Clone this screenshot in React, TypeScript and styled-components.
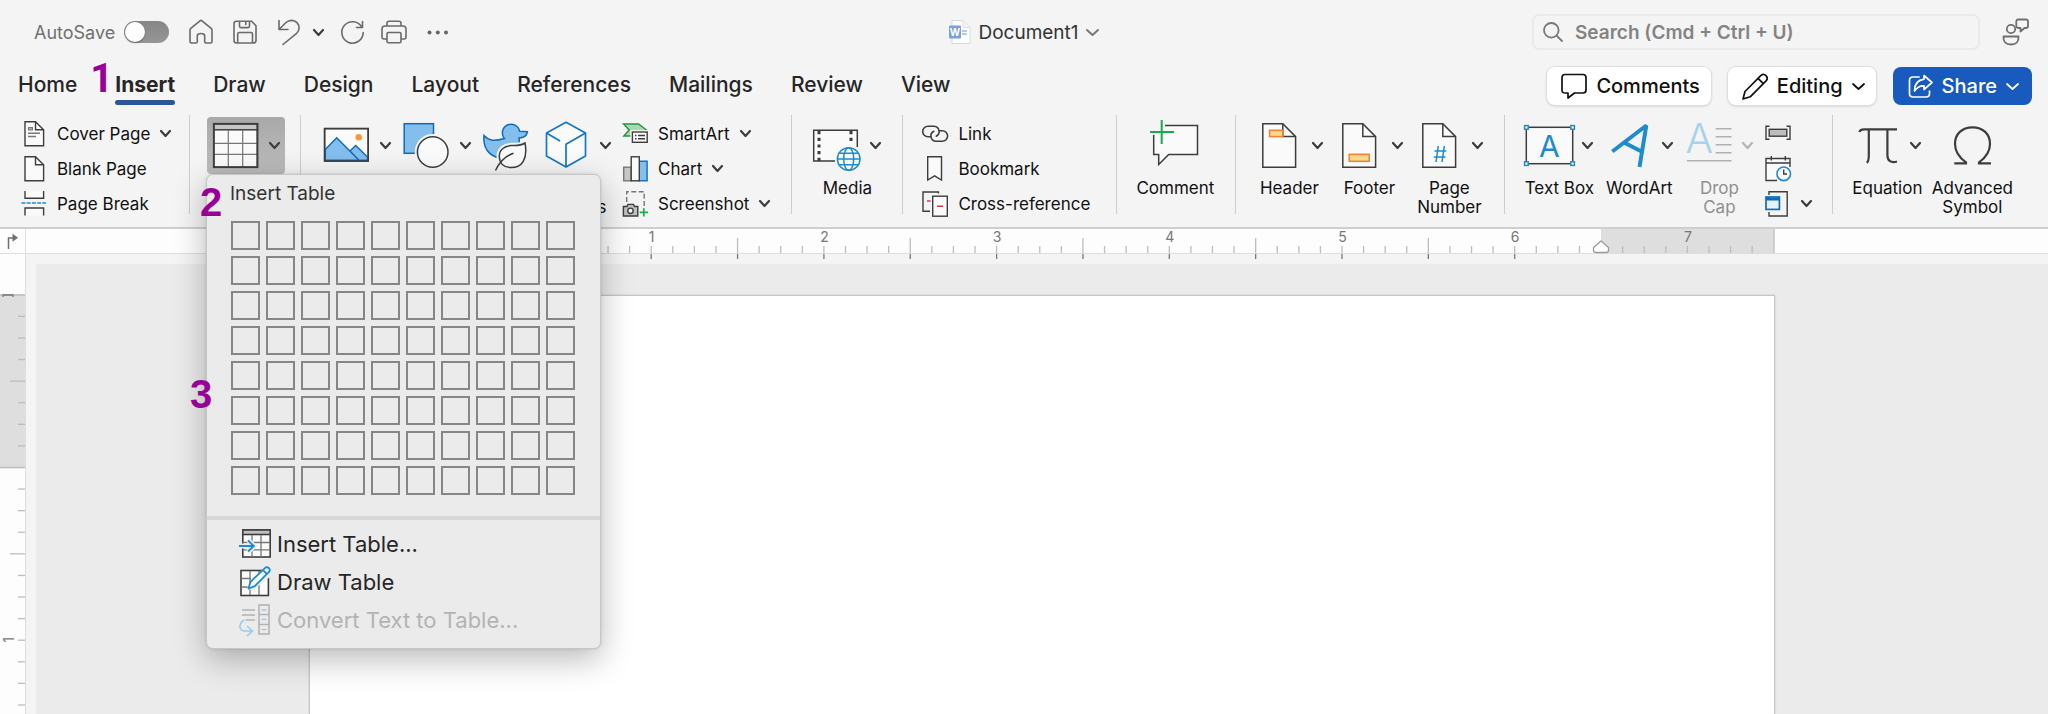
import React from "react";
import styled, { createGlobalStyle, css } from "styled-components";

const GlobalStyle = createGlobalStyle`
  *, *::before, *::after { box-sizing: border-box; }
  body {
    margin: 0;
    background: #f4f4f4;
    color: #1c1c1c;
    font-family: Inter, "Liberation Sans", sans-serif;
    font-size: 17px;
    overflow: hidden;
  }
  button, input { font: inherit; color: inherit; }
  button { background: none; border: 0; padding: 0; margin: 0; cursor: pointer; }
  svg { display: block; flex: none; overflow: visible; }
`;

const INK = "#3d3d3d";
const BLUE = "#1e8bcd";
const PAPER = "#fafafa";

/* ---------- window frame ---------- */

const Window = styled.div`
  display: flex;
  flex-direction: column;
  height: 100vh;
  overflow: hidden;
`;

const TitleBar = styled.header`
  display: grid;
  grid-template-columns: 1fr auto 1fr;
  align-items: center;
  height: 64px;
  padding: 0 18px;
`;

const QuickAccess = styled.div`
  display: flex;
  align-items: center;
  gap: 20px;
  padding-left: 16px;
  color: #666;
`;

const HistoryTools = styled.div`
  display: flex;
  align-items: center;
  gap: 16px;
`;

const AutoSave = styled.label`
  display: flex;
  align-items: center;
  gap: 9px;
  font-size: 18px;
  color: #707070;
`;

const Switch = styled.input`
  appearance: none;
  width: 45px;
  height: 22px;
  margin: 0;
  border-radius: 11px;
  background: linear-gradient(#868686, #969696);
  &::before {
    content: "";
    display: block;
    width: 20px;
    height: 20px;
    margin: 1px;
    border-radius: 50%;
    background: #fff;
    box-shadow: 0 1px 2px rgba(0, 0, 0, 0.35);
  }
`;

const IconButton = styled.button`
  display: flex;
  align-items: center;
  gap: 12px;
  color: inherit;
`;

const DocTitle = styled.button`
  display: flex;
  align-items: center;
  font-size: 19px;
  color: #333;
  gap: 7px;
`;

const TitleEnd = styled.div`
  display: flex;
  align-items: center;
  justify-content: flex-end;
  gap: 22px;
  color: #6f6f6f;
`;

const SearchBox = styled.label`
  display: flex;
  align-items: center;
  gap: 12px;
  width: 448px;
  height: 36px;
  padding: 0 9px;
  border: 2px solid #eaeaea;
  border-radius: 7px;
`;

const SearchInput = styled.input`
  flex: 1;
  min-width: 0;
  border: 0;
  padding: 0;
  outline: 0;
  background: none;
  font-size: 19px;
  font-weight: 600;
  &::placeholder { color: #838383; opacity: 1; }
`;

/* ---------- tabs ---------- */

const TabBar = styled.div`
  display: flex;
  align-items: flex-start;
  justify-content: space-between;
  height: 51px;
  padding: 0 16px 0 18px;
`;

const Tabs = styled.nav`
  display: flex;
  gap: 38px;
  padding-top: 8px;
`;

const Tab = styled.button<{ $active?: boolean }>`
  position: relative;
  height: 33px;
  line-height: 26px;
  padding-bottom: 7px;
  font-size: 21px;
  font-weight: ${(p) => (p.$active ? 700 : 500)};
  color: #262626;
  ${(p) =>
    p.$active &&
    css`
      &::after {
        content: "";
        position: absolute;
        left: 0;
        right: 0;
        bottom: 0;
        height: 5px;
        border-radius: 3px;
        background: #2b579a;
      }
    `}
`;

const Actions = styled.div`
  display: flex;
  gap: 17px;
  padding-top: 3px;
`;

const ActionButton = styled.button<{ $primary?: boolean }>`
  display: flex;
  align-items: center;
  justify-content: center;
  gap: 9px;
  height: 38px;
  padding: ${(p) => (p.$primary ? "0 13px 0 15px" : "0 11px 0 14px")};
  border-radius: 8px;
  font-size: 20px;
  font-weight: 500;
  color: ${(p) => (p.$primary ? "#fff" : "#111")};
  background: ${(p) => (p.$primary ? "#185abd" : "#fff")};
  box-shadow: ${(p) =>
    p.$primary ? "none" : "0 0 0 1px #dedede, 0 1px 3px rgba(0, 0, 0, 0.2)"};
`;

/* ---------- ribbon ---------- */

const Ribbon = styled.section`
  display: flex;
  flex: none;
  height: 114px;
  border-bottom: 2px solid #cfcfcf;
`;

const Group = styled.div<{ $start?: number; $end?: number }>`
  display: flex;
  flex: none;
  align-items: flex-start;
  gap: 2px;
  padding-left: ${(p) => p.$start ?? 16}px;
  padding-right: ${(p) => p.$end ?? 16}px;
`;

const Divider = styled.div`
  flex: none;
  width: 1px;
  height: 99px;
  background: #cecece;
`;

const Stack = styled.div<{ $width?: number; $start?: number }>`
  display: flex;
  flex-direction: column;
  width: ${(p) => (p.$width ? p.$width + "px" : "auto")};
  margin-left: ${(p) => p.$start ?? 0}px;
  padding-top: 1px;
`;

const RowButton = styled.button`
  display: flex;
  align-items: center;
  height: 35px;
  gap: 10px;
  color: #111;
  white-space: nowrap;
`;

const ToolWrap = styled.div`
  position: relative;
  flex: none;
`;

const ToolButton = styled.button<{ $width?: number; $disabled?: boolean }>`
  display: flex;
  flex-direction: column;
  align-items: center;
  flex: none;
  width: ${(p) => p.$width ?? 78}px;
  margin-top: 2px;
  color: ${(p) => (p.$disabled ? "#8f8f8f" : "#111")};
`;

const ToolFace = styled.span<{ $pressed?: boolean; $caret: boolean }>`
  display: flex;
  align-items: center;
  justify-content: ${(p) => (p.$caret ? "flex-start" : "center")};
  gap: 4px;
  width: 100%;
  height: 57px;
  border-radius: 4px;
  background: ${(p) => (p.$pressed ? "linear-gradient(#a9a9a9, #bcbcbc)" : "none")};
`;

const ToolLabel = styled.span`
  display: block;
  margin-top: 5px;
  line-height: 19px;
  text-align: center;
  white-space: nowrap;
`;

/* ---------- table menu ---------- */

const Menu = styled.div`
  position: absolute;
  z-index: 5;
  top: 59px;
  left: -1px;
  width: 395px;
  padding-bottom: 9px;
  border: 1px solid #c6c6c6;
  border-radius: 7px;
  background: #ebebeb;
  box-shadow: 0 10px 32px rgba(0, 0, 0, 0.28), 0 0 3px rgba(0, 0, 0, 0.12);
`;

const MenuTitle = styled.div`
  padding: 6px 23px 0;
  font-size: 19px;
  line-height: 26px;
  color: #333;
`;

const CellGrid = styled.div`
  display: grid;
  grid-template-columns: repeat(10, 29px);
  grid-auto-rows: 29px;
  gap: 6px;
  padding: 14px 24px 21px;
  border-bottom: 4px solid #d7d7d7;
`;

const Cell = styled.button`
  border: 2px solid #868686;
`;

const MenuList = styled.div`
  display: flex;
  flex-direction: column;
  padding: 5px 0 0 32px;
`;

const MenuItem = styled.button`
  display: flex;
  align-items: center;
  gap: 6px;
  height: 38px;
  font-size: 22px;
  color: #262626;
  &:disabled { color: #b3b3b3; }
`;

const Callout = styled.span<{ $x: number; $y: number; $family?: string }>`
  position: absolute;
  z-index: 6;
  left: ${(p) => p.$x}px;
  top: ${(p) => p.$y}px;
  font: bold 40px/40px ${(p) => p.$family ?? '"Liberation Sans"'}, Arial, sans-serif;
  color: #990099;
`;

/* ---------- rulers and page ---------- */

const RulerBar = styled.div`
  display: flex;
  flex: none;
  height: 25px;
  background: #fdfdfd;
  border-bottom: 1px solid #dedede;
`;

const RulerCorner = styled.button`
  display: flex;
  flex: none;
  align-items: center;
  justify-content: center;
  width: 26px;
  border-right: 1px solid #dedede;
`;

const RulerTrack = styled.div`
  display: flex;
  flex: 1;
  justify-content: center;
  padding-left: 10px;
`;

const Workspace = styled.div`
  display: flex;
  flex: 1;
  min-height: 0;
`;

const SideRuler = styled.div`
  flex: none;
  width: 26px;
  overflow: hidden;
  background: #fdfdfd;
  border-right: 1px solid #dedede;
`;

const Desk = styled.main`
  display: flex;
  flex: 1;
  justify-content: center;
  margin: 10px 0 0 10px;
  padding-top: 31px;
  background: #ebebeb;
`;

const Page = styled.article`
  width: 1466px;
  background: #fff;
  border: 1px solid #c6c6c6;
  border-bottom: 0;
  box-shadow: 0 0 2px rgba(0, 0, 0, 0.15);
`;

/* ---------- small glyphs ---------- */

const Caret = ({ color = INK, w = 11, s = 2.2 }: { color?: string; w?: number; s?: number }) => (
  <svg width={w} height="7" viewBox={`0 0 ${w} 7`} fill="none" stroke={color} strokeWidth={s} strokeLinecap="round" strokeLinejoin="round">
    <path d={`M1 1 L${w / 2} 6 L${w - 1} 1`} />
  </svg>
);

const Quick = ({ children, w = 24 }: { children: React.ReactNode; w?: number }) => (
  <svg width={w} height="26" viewBox={`0 0 ${w} 26`} fill="none" stroke="#6a6a6a" strokeWidth="1.6" strokeLinejoin="round" strokeLinecap="round">
    {children}
  </svg>
);

const Big = ({ children }: { children: React.ReactNode }) => (
  <svg width="58" height="57" viewBox="0 0 58 57" fill="none" stroke={INK} strokeWidth="1.5">
    {children}
  </svg>
);

const Small = ({ children }: { children: React.ReactNode }) => (
  <svg width="26" height="26" viewBox="0 0 26 26" fill="none" stroke={INK} strokeWidth="1.4">
    {children}
  </svg>
);

const Sheet = () => (
  <>
    <path d="M12.8 6.8 H32.8 L45.6 19.6 V50.3 H12.8 Z" fill={PAPER} />
    <path d="M32.8 6.8 V19.6 H45.6" />
  </>
);

const SmallSheet = () => (
  <>
    <path d="M4 .8 H14.5 L22.6 8.8 V24.8 H4 Z" fill={PAPER} />
    <path d="M14.5 .8 V8.8 H22.6" />
  </>
);

/* ---------- composed parts ---------- */

type ToolProps = {
  icon: React.ReactNode;
  label?: React.ReactNode;
  name?: string;
  caret?: boolean;
  width?: number;
  disabled?: boolean;
  pressed?: boolean;
};

const Tool = ({ icon, label, name, caret = true, width, disabled, pressed }: ToolProps) => (
  <ToolButton $width={width} $disabled={disabled} disabled={disabled} aria-label={name}>
    <ToolFace $pressed={pressed} $caret={caret}>
      {icon}
      {caret && <Caret color={disabled ? "#b5b5b5" : INK} />}
    </ToolFace>
    {label && <ToolLabel>{label}</ToolLabel>}
  </ToolButton>
);

const Row = ({ icon, label, name, caret }: { icon: React.ReactNode; label?: string; name?: string; caret?: boolean }) => (
  <RowButton aria-label={name}>
    {icon}
    {label}
    {caret && <Caret />}
  </RowButton>
);

const INCH = 172.7;

const TopRuler = () => {
  const ticks: React.ReactNode[] = [];
  for (let i = -7; i <= 59; i++) {
    const x = 169.5 + (i * INCH) / 8;
    const half = i % 8 === 4 || i % 8 === -4;
    const outside = i < 0 || i > 52;
    if (i === 52) continue;
    ticks.push(<path key={i} d={`M${x} ${half ? 9 : 17} V24`} stroke="#bdbdbd" />);
    if (i % 4 === 0 && !outside) ticks.push(<path key={"b" + i} d={`M${x} 25 V30`} stroke="#777" />);
  }
  return (
    <svg width="1466" height="24" viewBox="0 0 1466 24" strokeWidth="1.3">
      <rect x="-3" y="0" width="172" height="24" fill="#dedede" />
      <rect x="1292" y="0" width="173" height="24" fill="#dedede" />
      <path d="M1465 0 V24" stroke="#bdbdbd" />
      {ticks}
      {[1, 2, 3, 4, 5, 6, 7].map((n) => (
        <text key={n} x={170 + n * INCH} y="13" fontSize="14" fill="#777" textAnchor="middle">
          {n}
        </text>
      ))}
      <path d="M1292 12 L1299.5 18.5 V21 Q1299.5 23.5 1297 23.5 H1287 Q1284.5 23.5 1284.5 21 V18.5 Z" fill="#fff" stroke="#9a9a9a" strokeLinejoin="round" />
    </svg>
  );
};

const LeftRuler = () => {
  const ticks: React.ReactNode[] = [];
  for (let i = -7; i <= 24; i++) {
    if (i === 0) continue;
    const y = 213.5 + (i * INCH) / 8;
    const half = Math.abs(i % 8) === 4;
    ticks.push(<path key={i} d={`M${half ? 10 : 18} ${y} H25`} />);
  }
  return (
    <svg width="25" height="600" viewBox="0 0 25 600" stroke="#bdbdbd" strokeWidth="1.3">
      <rect x="0" y="40" width="25" height="174" fill="#dedede" stroke="none" />
      <path d="M0 41 H25 M0 213.5 H25" />
      <path d="M3 43 V41 H13 V43" stroke="#777" fill="none" />
      {ticks}
      <text transform="translate(14 386) rotate(-90)" fontSize="14" fill="#777" stroke="none" textAnchor="middle" y="0">
        1
      </text>
    </svg>
  );
};

const TableMenu = () => (
  <Menu role="menu">
    <MenuTitle>Insert Table</MenuTitle>
    <CellGrid>
      {Array.from({ length: 80 }, (_, i) => (
        <Cell key={i} aria-label={`${(i % 10) + 1} by ${Math.floor(i / 10) + 1}`} />
      ))}
    </CellGrid>
    <MenuList>
      <MenuItem role="menuitem">
        <svg width="32" height="32" viewBox="0 0 32 32" fill="none" stroke={INK} strokeWidth="1.6">
          <rect x="3.8" y="2" width="27.4" height="27" fill={PAPER} />
          <rect x="3.8" y="2" width="27.4" height="4.5" fill="#c0c0c0" />
          <path d="M13 7 V29 M22 7 V29 M4 14.5 H31 M4 21.8 H31" stroke="#777" strokeWidth="1.3" />
          <path d="M0 18 H15 M9 12 L15 18 L9 24" stroke="#ebebeb" strokeWidth="5" />
          <path d="M0 18 H15 M9 12.5 L14.8 18 L9 23.5" stroke={BLUE} strokeWidth="1.8" />
        </svg>
        Insert Table...
      </MenuItem>
      <MenuItem role="menuitem">
        <svg width="32" height="32" viewBox="0 0 32 32" fill="none" stroke={INK} strokeWidth="1.6">
          <rect x="2" y="4.5" width="27.4" height="25" fill={PAPER} />
          <path d="M11 5 V29 M20 5 V29 M2 12.5 H12 M2 21 H12" stroke="#777" strokeWidth="1.3" />
          <path d="M12 20 L27 4 L30 8 L13 21 Z" stroke="#ebebeb" strokeWidth="6" />
          <path d="M9.5 22.5 L11.5 15.8 L26.2 1.8 Q28 .6 30 2.2 Q31.5 4 30 5.8 L15.8 20.2 Z M24 4.2 L27.8 8" fill={PAPER} stroke={BLUE} strokeWidth="1.8" strokeLinejoin="round" />
        </svg>
        Draw Table
      </MenuItem>
      <MenuItem role="menuitem" disabled>
        <svg width="32" height="32" viewBox="0 0 32 32" fill="none" stroke="#b3b3b3" strokeWidth="1.6">
          <rect x="20" y="1" width="10" height="29" />
          <path d="M20 10.5 H30 M20 20.5 H30 M3 6 H16 M3 11 H16 M6.5 16 H16" />
          <path d="M22.5 6 H27.5 M22.5 15.5 H27.5 M22.5 25.5 H27.5 M5 16 C-1 20 0 27 6 27 H13 M8 22 L13.5 27 L8 32" stroke="#9ccbec" />
        </svg>
        Convert Text to Table...
      </MenuItem>
    </MenuList>
    <Callout $x={-7} $y={7}>2</Callout>
    <Callout $x={-17} $y={199}>3</Callout>
  </Menu>
);

export default function App() {
  return (
    <Window>
      <GlobalStyle />
      <TitleBar>
        <QuickAccess>
          <AutoSave>
            AutoSave
            <Switch type="checkbox" role="switch" />
          </AutoSave>
          <IconButton aria-label="Home">
            <Quick>
              <path d="M1 11 Q1 10 1.8 9.3 L11 1.8 Q12 1 13 1.8 L22.2 9.3 Q23 10 23 11 V22.5 Q23 24 21.5 24 H17 Q15.7 24 15.7 22.7 V17 Q15.7 14.5 12 14.5 Q8.3 14.5 8.3 17 V22.7 Q8.3 24 7 24 H2.5 Q1 24 1 22.5 Z" />
            </Quick>
          </IconButton>
          <IconButton aria-label="Save">
            <Quick>
              <path d="M3.5 2.2 H18.5 L23 6.7 V21.5 Q23 24 20.5 24 H3.5 Q1 24 1 21.5 V4.7 Q1 2.2 3.5 2.2 Z M6.5 2.2 V7.3 Q6.5 8.6 7.8 8.6 H15.2 Q16.5 8.6 16.5 7.3 V2.2 M4.7 24 V15 Q4.7 13.5 6.2 13.5 H18 Q19.5 13.5 19.5 15 V24 M12.8 3 V5.5" />
            </Quick>
          </IconButton>
          <HistoryTools>
            <IconButton aria-label="Undo">
              <Quick>
                <path d="M2 1.5 V10.5 H11 M2 10.5 L9 3.5 C12 .8 17 .4 20 3.6 C23 6.8 22.6 11.6 19.6 14.4 L6 25.5" />
              </Quick>
              <Caret />
            </IconButton>
            <IconButton aria-label="Redo">
              <Quick w={25}>
                <path d="M22.5 2.5 V8.5 H16.5 M22 8.5 A10.7 10.7 0 1 0 23.2 13.5" />
              </Quick>
            </IconButton>
            <IconButton aria-label="Print">
              <Quick w={26}>
                <path d="M6 7 V4 Q6 2.2 8 2.2 H18 Q20 2.2 20 4 V7 M6 20 H3 Q1 20 1 18 V10 Q1 7 4 7 H22 Q25 7 25 10 V18 Q25 20 23 20 H20 M7.5 13.5 H18.5 Q20 13.5 20 15 V22.2 Q20 23.8 18.5 23.8 H7.5 Q6 23.8 6 22.2 V15 Q6 13.5 7.5 13.5 Z" />
              </Quick>
            </IconButton>
          </HistoryTools>
          <IconButton aria-label="More">
            <svg width="22" height="5" viewBox="0 0 22 5" fill="#666">
              <circle cx="2.5" cy="2.5" r="2" />
              <circle cx="10.8" cy="2.5" r="2" />
              <circle cx="19" cy="2.5" r="2" />
            </svg>
          </IconButton>
        </QuickAccess>
        <DocTitle>
          <svg width="22" height="26" viewBox="0 0 22 26">
            <path d="M3 1.5 H14 L21 8.5 V24.5 H3 Z" fill="#fff" stroke="#d8d8d8" />
            <path d="M14 1.5 V8.5 H21" fill="#f4f4f4" stroke="#dedede" />
            <path d="M13 12 H18 M13 15 H18" stroke="#8fbdf0" strokeWidth="1.4" />
            <rect x="0" y="6.5" width="12" height="13" rx="1" fill="#7a9fdb" />
            <text x="6" y="16.5" fontSize="10" fontWeight="700" fill="#fff" textAnchor="middle">W</text>
          </svg>
          Document1
          <Caret color="#777" w={13} s={2} />
        </DocTitle>
        <TitleEnd>
          <SearchBox>
            <svg width="20" height="20" viewBox="0 0 20 20" fill="none" stroke="#777" strokeWidth="1.8" strokeLinecap="round">
              <circle cx="8.3" cy="8.3" r="7.3" />
              <path d="M13.6 13.6 L19 19" />
            </svg>
            <SearchInput placeholder="Search (Cmd + Ctrl + U)" aria-label="Search" />
          </SearchBox>
          <IconButton aria-label="Account">
            <svg width="28" height="28" viewBox="0 0 28 28" fill="none" stroke="#6f6f6f" strokeWidth="1.8" strokeLinejoin="round">
              <circle cx="9" cy="11" r="4.2" />
              <path d="M1.5 18.5 H16.5 Q17 26.5 9 26.5 Q1 26.5 1.5 18.5 Z M16 1.5 H24 Q26 1.5 26 3.5 V8 Q26 10 24 10 H22.5 L18.5 13.5 V10 H17 Q14.3 10 14.3 8 V3.5 Q14.3 1.5 16 1.5 Z" />
            </svg>
          </IconButton>
        </TitleEnd>
      </TitleBar>

      <TabBar>
        <Tabs>
          <Tab>Home</Tab>
          <Tab $active>
            Insert
            <Callout $x={-25} $y={-13} $family="Roboto">1</Callout>
          </Tab>
          {["Draw", "Design", "Layout", "References", "Mailings", "Review", "View"].map((t) => (
            <Tab key={t}>{t}</Tab>
          ))}
        </Tabs>
        <Actions>
          <ActionButton>
            <svg width="26" height="26" viewBox="0 0 26 26" fill="none" stroke="#111" strokeWidth="1.7" strokeLinejoin="round">
              <path d="M4 1.5 H22 Q25 1.5 25 4.5 V17 Q25 20 22 20 H13.5 L7 25 V20 H4 Q1 20 1 17 V4.5 Q1 1.5 4 1.5 Z" />
            </svg>
            Comments
          </ActionButton>
          <ActionButton>
            <svg width="26" height="27" viewBox="0 0 26 27" fill="none" stroke="#111" strokeWidth="1.7" strokeLinejoin="round">
              <path d="M1 26 L3 18.5 L19 2.3 Q21.5 .2 24 2.6 Q26.4 5.2 24.3 7.6 L8.2 23.8 Z M16 5.3 L21.4 10.6" />
            </svg>
            Editing
            <Caret color="#111" w={13} s={1.8} />
          </ActionButton>
          <ActionButton $primary>
            <svg width="25" height="25" viewBox="0 0 25 25" fill="none" stroke="#fff" strokeWidth="1.7" strokeLinejoin="round" strokeLinecap="round">
              <path d="M11 3 H5 Q1.5 3 1.5 6.5 V19.5 Q1.5 23 5 23 H18 Q21.5 23 21.5 19.5 V17" />
              <path d="M16 1.5 L24 8.5 L16 15.5 V11.8 Q10 11.5 6.5 17 Q6.5 6.5 16 5.2 Z" />
            </svg>
            Share
            <Caret color="#fff" w={13} s={1.8} />
          </ActionButton>
        </Actions>
      </TabBar>

      <Ribbon>
        <Group $start={21} $end={0}>
          <Stack $width={168}>
            <Row
              caret
              label="Cover Page"
              icon={
                <Small>
                  <SmallSheet />
                  <path d="M7 12.3 H19 M7 15.5 H15" stroke="#777" />
                  <rect x="7.5" y="6.5" width="4" height="2.5" fill="#aaa" stroke="#777" strokeWidth="1" />
                </Small>
              }
            />
            <Row label="Blank Page" icon={<Small><SmallSheet /></Small>} />
            <Row
              label="Page Break"
              icon={
                <Small>
                  <path d="M4 0 V7.3 H22.6 V0 M4 24.5 V17 H22.6 V24.5" fill={PAPER} />
                  <path d="M.5 12 H25" stroke={BLUE} strokeDasharray="4 1.2" />
                </Small>
              }
            />
          </Stack>
        </Group>
        <Divider />
        <Group $start={17} $end={15}>
          <ToolWrap>
            <Tool
              pressed
              name="Table"
              icon={
                <Big>
                  <rect x="6.8" y="6.8" width="43.6" height="43.4" fill={PAPER} />
                  <rect x="6.8" y="6.8" width="43.6" height="6" fill="#c6c6c6" />
                  <path d="M21.3 13 V50 M35.7 13 V50 M7 26.3 H50 M7 37.3 H50" stroke="#777" strokeWidth="1.2" />
                  <rect x="6.8" y="6.8" width="43.6" height="43.4" strokeWidth="1.8" />
                </Big>
              }
            />
            <TableMenu />
          </ToolWrap>
        </Group>
        <Divider />
        <Group $start={17} $end={21}>
          <Tool
            name="Pictures"
            icon={
              <Big>
                <rect x="6.6" y="11.6" width="43.6" height="32.4" fill={PAPER} />
                <path d="M7.3 32.5 L18.7 20.8 L41 43.3 H7.3 Z M32 34 L37.7 28.5 L49.5 40 V43.3 H41 Z" fill="#83beec" stroke="#0f6cbd" />
                <circle cx="40.7" cy="20.3" r="3.2" fill="#ff9433" stroke="none" />
                <rect x="6.6" y="11.6" width="43.6" height="32.4" />
              </Big>
            }
          />
          <Tool
            name="Shapes"
            icon={
              <Big>
                <rect x="6.2" y="6.7" width="29.3" height="29.6" fill="#83beec" stroke="#0f6cbd" />
                <circle cx="34.7" cy="35" r="18" fill="#f4f4f4" stroke="none" />
                <circle cx="34.7" cy="35" r="15.3" fill={PAPER} />
              </Big>
            }
          />
          <Tool
            caret={false}
            width={58}
            name="Icons"
            icon={
              <Big>
                <path d="M6 18.5 C11 24 16 24.5 26.4 21.5 A8.7 8.7 0 1 1 41.6 14.3 L49.4 14.8 C48.8 18.5 46 20.8 41 21 C42.5 28 38 38 30 40 C15 43.5 4.5 34 6 18.5 Z" fill="#83beec" stroke="#0f6cbd" />
                <path d="M47 26 C42 29.3 38 28.3 33 28.6 C26 29 21.2 33 21.3 39.5 C21.5 46.5 26 50.6 33 50.6 C44 50.6 50 42 47 26 Z M17.8 53.5 L24 46" fill="#f4f4f4" stroke="#f4f4f4" strokeWidth="5.5" />
                <path d="M47 26 C42 29.3 38 28.3 33 28.6 C26 29 21.2 33 21.3 39.5 C21.5 46.5 26 50.6 33 50.6 C44 50.6 50 42 47 26 Z" fill={PAPER} />
                <path d="M17.5 53.5 C21 46 27 39 35.5 36.3" />
              </Big>
            }
          />
          <Tool
            label={<>3D<br />Models</>}
            icon={
              <Big>
                <path d="M28 5.3 L47.5 16 V39 L28 50 L8.5 39 V16 Z" fill={PAPER} stroke="none" />
                <path d="M22 24 L8.5 16 L28 5.3 L47.5 16 L28 27.3 V50 L8.5 39 V16 M47.5 16 V39 L28 50" stroke="#1676c8" strokeWidth="1.7" strokeLinejoin="round" />
              </Big>
            }
          />
          <Stack $start={4}>
            <Row
              caret
              label="SmartArt"
              icon={
                <Small>
                  <path d="M1.5 3 H16.5 L24.5 9 L18 15 H1.8 L7.2 9 Z" fill="#a5dcae" stroke="#2c8f45" />
                  <rect x="8.3" y="9" width="18" height="14" fill="#f4f4f4" stroke="none" />
                  <rect x="10.4" y="11" width="14.8" height="10.3" fill={PAPER} />
                  <path d="M13 14.5 H14.5 M16 14.5 H23 M13 17.8 H14.5 M16 17.8 H23" />
                </Small>
              }
            />
            <Row
              caret
              label="Chart"
              icon={
                <Small>
                  <rect x="1.7" y="11.2" width="7.5" height="13.6" fill="#c6c6c6" stroke="#777" />
                  <rect x="17.3" y="5.2" width="7.8" height="19.6" fill="#83beec" stroke="#0f6cbd" />
                  <rect x="9.2" y=".8" width="8.1" height="24" fill={PAPER} />
                </Small>
              }
            />
            <Row
              caret
              label="Screenshot"
              icon={
                <Small>
                  <path d="M4.7 11 V.8 H22.2 V16" stroke="#777" strokeDasharray="5 2.4" />
                  <path d="M1.4 15.5 H5 L6 13.4 H11.5 L12.5 15.5 H15.8 V25 H1.4 Z" fill="#c0c0c0" />
                  <circle cx="8.5" cy="19.8" r="2.7" fill={PAPER} />
                  <path d="M21.8 17.3 V25.5 M17.7 21.4 H26" stroke="#1aab4f" strokeWidth="1.7" />
                </Small>
              }
            />
          </Stack>
        </Group>
        <Divider />
        <Group $start={16} $end={16}>
          <Tool
            label="Media"
            icon={
              <Big>
                <path d="M49.3 30 V13.2 H5.7 V44 H26 L35 30 Z" fill={PAPER} stroke="none" />
                <path d="M49.3 30 V13.2 H5.7 V44 H27" />
                <path d="M11 14 V44 M43 14 V27" strokeWidth="3" strokeDasharray="3.2 3.5" />
                <g stroke={BLUE}>
                  <circle cx="40.7" cy="42" r="11.3" fill={PAPER} />
                  <ellipse cx="40.7" cy="42" rx="5" ry="11.3" />
                  <path d="M29.4 42 H52 M31.5 36.3 H50 M31.5 47.7 H50 " />
                </g>
              </Big>
            }
          />
        </Group>
        <Divider />
        <Group $start={19} $end={0}>
          <Stack $width={194}>
            <Row
              label="Link"
              icon={
                <Small>
                  <path d="M8 15.8 H6 A5.3 5.3 0 0 1 6 5.2 H12 A5.3 5.3 0 0 1 14.2 15.2 M18 9.7 H20.3 A5.3 5.3 0 0 1 20.3 20.3 H14 A5.3 5.3 0 0 1 11.8 10.3" strokeWidth="1.6" strokeLinecap="round" />
                </Small>
              }
            />
            <Row label="Bookmark" icon={<Small><path d="M5.7 .8 H19.5 V24 L12.6 19.8 L5.7 24 Z" fill={PAPER} /></Small>} />
            <Row
              label="Cross-reference"
              icon={
                <Small>
                  <path d="M16.5 2.5 V1 H1 V20.3 H8" fill="none" />
                  <rect x="10.7" y="5.2" width="14.6" height="20" fill={PAPER} />
                  <path d="M5 10 H8.5 M15 15.3 H21" stroke="#e8303a" />
                </Small>
              }
            />
          </Stack>
        </Group>
        <Divider />
        <Group $start={19} $end={21}>
          <Tool
            caret={false}
            label="Comment"
            icon={
              <Big>
                <path d="M19 8.5 H51.5 V37.4 H22.7 L12.7 47.5 V37.4 H7.7 V18" fill={PAPER} />
                <path d="M15.7 3 V27 M4 15 H28" stroke="#f4f4f4" strokeWidth="5" />
                <path d="M15.7 3 V27 M4 15 H28" stroke="#1aab4f" strokeWidth="2" />
              </Big>
            }
          />
        </Group>
        <Divider />
        <Group $start={14} $end={16}>
          <Tool label="Header" icon={<Big><Sheet /><rect x="19.6" y="13.3" width="13.2" height="6.3" fill="#fcd78c" stroke="#f08032" /></Big>} />
          <Tool label="Footer" icon={<Big><Sheet /><rect x="19.2" y="37.3" width="20" height="7" fill="#fcd78c" stroke="#f08032" /></Big>} />
          <Tool
            label={<>Page<br />Number</>}
            icon={
              <Big>
                <Sheet />
                <path d="M28.3 29 L26 45 M34.3 29 L32 45 M24.5 34 H36.3 M23.8 40 H35.5" stroke={BLUE} />
              </Big>
            }
          />
        </Group>
        <Divider />
        <Group $start={15} $end={20}>
          <Tool
            label="Text Box"
            icon={
              <Big>
                <rect x="6.3" y="10.3" width="46.4" height="36.4" fill={PAPER} />
                <g stroke={BLUE} fill="#fff">
                  <rect x="4.6" y="8.6" width="3.6" height="3.6" />
                  <rect x="50.8" y="8.6" width="3.6" height="3.6" />
                  <rect x="4.6" y="44.8" width="3.6" height="3.6" />
                  <rect x="50.8" y="44.8" width="3.6" height="3.6" />
                </g>
                <text x="29.3" y="39.5" fontSize="30" fontWeight="400" fill={BLUE} stroke="none" textAnchor="middle">A</text>
              </Big>
            }
          />
          <Tool
            label="WordArt"
            icon={
              <Big>
                <path d="M12.3 34.5 L46.3 8.5 L39.5 50 M25 26 L42 34.8" stroke={BLUE} strokeWidth="4" strokeLinejoin="bevel" />
              </Big>
            }
          />
          <Tool
            disabled
            label={<>Drop<br />Cap</>}
            icon={
              <Big>
                <text x="19.3" y="36.3" fontSize="41" fontWeight="300" fill="#a9d1ec" stroke="none" textAnchor="middle">A</text>
                <path d="M35.7 11.7 H51.5 M35.7 19.7 H51.5 M35.7 27.7 H51.5 M35.7 35.7 H51.5 M7 43.7 H51.5" stroke="#b0b0b0" />
              </Big>
            }
          />
          <Stack $start={5}>
            <Row
              name="Field"
              icon={
                <Small>
                  <path d="M4.5 5.2 H1 V18.3 H4.5 M21.5 5.2 H25 V18.3 H21.5" />
                  <rect x="4.2" y="8.3" width="17.6" height="6.9" fill="#bdbdbd" />
                </Small>
              }
            />
            <Row
              name="Date and time"
              icon={
                <Small>
                  <path d="M25 11 V2.5 H1 V24.5 H12" fill={PAPER} />
                  <path d="M1 7 H25 M6.3 0 V4.5 M20.3 0 V4.5" />
                  <circle cx="18.7" cy="17.8" r="6.8" fill={PAPER} stroke={BLUE} strokeWidth="1.6" />
                  <path d="M18.7 13.5 V18 H22" />
                </Small>
              }
            />
            <Row
              caret
              name="Object"
              icon={
                <Small>
                  <path d="M4 4 V.8 H22.2 V25 H4 V21" />
                  <rect x="1" y="6" width="13.4" height="12.4" fill="#e6f1fb" stroke="#0f6cbd" strokeWidth="1.7" />
                  <path d="M1 8 H14.4" stroke="#0f6cbd" strokeWidth="3" />
                </Small>
              }
            />
          </Stack>
        </Group>
        <Divider />
        <Group $start={15}>
          <Tool
            label="Equation"
            icon={
              <Big>
                <path d="M11.3 15 C12 13 13 12.3 16 12.3 H49 M20.8 12.3 V38 C20.8 42 20.5 44.5 18.8 45.8 M39.4 12.3 V38 C39.4 44 43 46.3 49 44.5" strokeWidth="2.2" />
              </Big>
            }
          />
          <Tool
            caret={false}
            width={88}
            label={<>Advanced<br />Symbol</>}
            icon={
              <Big>
                <path d="M11.3 46.3 H23 V45.3 C15.5 40 12 34 12 27 C12 17 19 10.3 29.5 10.3 C40 10.3 47 17 47 27 C47 34 43.5 40 36 45.3 V46.3 H48" strokeWidth="2.2" />
              </Big>
            }
          />
        </Group>
      </Ribbon>

      <RulerBar>
        <RulerCorner aria-label="Tab stop">
          <svg width="12" height="16" viewBox="0 0 12 16" fill="none" stroke="#707070" strokeWidth="1.5">
            <path d="M1.5 16 V5 H6" />
            <path d="M5.5 .8 L11 4.8 L5.5 8.8 Z" fill="#707070" stroke="none" />
          </svg>
        </RulerCorner>
        <RulerTrack>
          <TopRuler />
        </RulerTrack>
      </RulerBar>
      <Workspace>
        <SideRuler>
          <LeftRuler />
        </SideRuler>
        <Desk>
          <Page />
        </Desk>
      </Workspace>
    </Window>
  );
}
